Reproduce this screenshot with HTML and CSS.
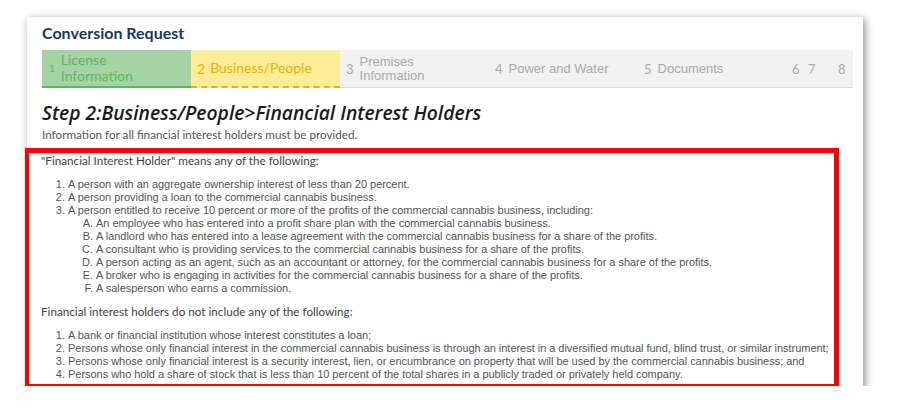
FILE: index.html
```html
<!DOCTYPE html>
<html>
<head>
<link rel="stylesheet" href="styles.css">
</head>
<body>

<div class="card">
    <h1 class="title">Conversion Request</h1>

    <div class="steps">
        <div class="step done"><span class="num small">1</span><span class="label">License<br>Information</span></div>
        <div class="step current"><span class="num">2</span><span class="label">Business/People</span></div>
        <div class="step todo"><span class="num">3</span><span class="label">Premises<br>Information</span></div>
        <div class="step todo"><span class="num">4</span><span class="label">Power and Water</span></div>
        <div class="step todo"><span class="num">5</span><span class="label">Documents</span></div>
        <div class="minis">
            <span class="mini m6">6</span>
            <span class="mini m7">7</span>
            <span class="mini">8</span>
        </div>
    </div>

    <h2 class="step-title">Step 2:Business/People&gt;Financial Interest Holders</h2>
    <p class="step-note">Information for all financial interest holders must be provided.</p>

    <div class="highlight">
        <p class="lead">"Financial Interest Holder" means any of the following:</p>
        <ol class="items">
            <li>A person with an aggregate ownership interest of less than 20 percent.</li>
            <li>A person providing a loan to the commercial cannabis business.</li>
            <li>A person entitled to receive 10 percent or more of the profits of the commercial cannabis business, including:
                <ol class="subitems">
                    <li>An employee who has entered into a profit share plan with the commercial cannabis business.</li>
                    <li>A landlord who has entered into a lease agreement with the commercial cannabis business for a share of the profits.</li>
                    <li>A consultant who is providing services to the commercial cannabis business for a share of the profits.</li>
                    <li>A person acting as an agent, such as an accountant or attorney, for the commercial cannabis business for a share of the profits.</li>
                    <li>A broker who is engaging in activities for the commercial cannabis business for a share of the profits.</li>
                    <li>A salesperson who earns a commission.</li>
                </ol>
            </li>
        </ol>

        <p class="lead">Financial interest holders do not include any of the following:</p>
        <ol class="items">
            <li>A bank or financial institution whose interest constitutes a loan;</li>
            <li>Persons whose only financial interest in the commercial cannabis business is through an interest in a diversified mutual fund, blind trust, or similar instrument;</li>
            <li>Persons whose only financial interest is a security interest, lien, or encumbrance on property that will be used by the commercial cannabis business; and</li>
            <li>Persons who hold a share of stock that is less than 10 percent of the total shares in a publicly traded or privately held company.</li>
        </ol>
    </div>
</div>

</body>
</html>
```

FILE: styles.css
```css
body {
    margin: 0;
    padding: 0;
    background: #fff;
}
.card {
    width: 836px;
    box-sizing: border-box;
    margin: 17px 0 0 27px;
    padding: 6px 10px 0 15px;
    background: #fff;
    box-shadow: 2px 2px 8px rgba(0, 0, 0, 0.45);
}
.title {
    margin: 0;
    font-family: Lato, sans-serif;
    font-size: 16px;
    font-weight: 700;
    line-height: 20px;
    color: #15395f;
}
.steps {
    display: flex;
    margin-top: 7px;
    height: 38px;
    background: #f2f2f2;
    border-bottom: 1px solid #dcdcdc;
    box-sizing: border-box;
}
.step {
    width: 149px;
    display: flex;
    align-items: center;
    padding-left: 6px;
    box-sizing: border-box;
    font-family: "Liberation Sans", Arial, sans-serif;
    font-size: 13px;
    color: #aaa;
}
.step .num {
    font-family: Lato, sans-serif;
    margin-right: 6px;
}
.step .label {
    line-height: 14px;
}
.step.done {
    background: #a5d3a5;
    color: #5cb85c;
    border-bottom: 2px solid #5cb85c;
    margin-bottom: -1px;
    font-family: Lato, sans-serif;
    font-size: 14px;
    padding-left: 7px;
}
.step.done .label {
    line-height: 16px;
}
.step .num.small {
    font-size: 10px;
}
.step.current {
    background: #ffec99;
    color: #e6b400;
    border-bottom: 2px dashed #e6b400;
    margin-bottom: -1px;
    font-family: Lato, sans-serif;
    font-size: 14px;
}
.step.current .num {
    margin-right: 5px;
}
.minis {
    display: flex;
    align-items: center;
    padding-left: 5px;
    font-family: Lato, sans-serif;
    font-size: 13px;
    color: #aaa;
}
.mini.m6 {
    width: 16px;
}
.mini.m7 {
    width: 30px;
}
.step-title {
    margin: 13px 0 0;
    font-family: "Open Sans", sans-serif;
    font-style: italic;
    font-weight: 600;
    font-size: 19.3px;
    line-height: 24px;
    color: #1a1a1a;
}
.step-note {
    margin: 2px 0 0;
    font-family: Lato, sans-serif;
    font-size: 11.7px;
    line-height: 14px;
    color: #555;
}
.highlight {
    width: 814px;
    box-sizing: border-box;
    margin: 7px 0 -3px -17px;
    padding: 1px 0 3px 12px;
    border: 5px solid #ff0000;
    border-left-width: 4px;
    background: #fff;
    position: relative;
}
.lead {
    margin: 0;
    font-family: Lato, sans-serif;
    font-size: 11.7px;
    line-height: 13px;
    color: #444;
}
.items {
    margin: 11px 0 10px;
    padding-left: 27px;
    font-family: "Liberation Sans", Arial, sans-serif;
    font-size: 11px;
    line-height: 13px;
    letter-spacing: -0.03px;
    color: #555;
}
.items:last-child {
    margin-bottom: 0;
}
.subitems {
    margin: 0;
    padding-left: 28px;
    list-style-type: upper-alpha;
}
```
